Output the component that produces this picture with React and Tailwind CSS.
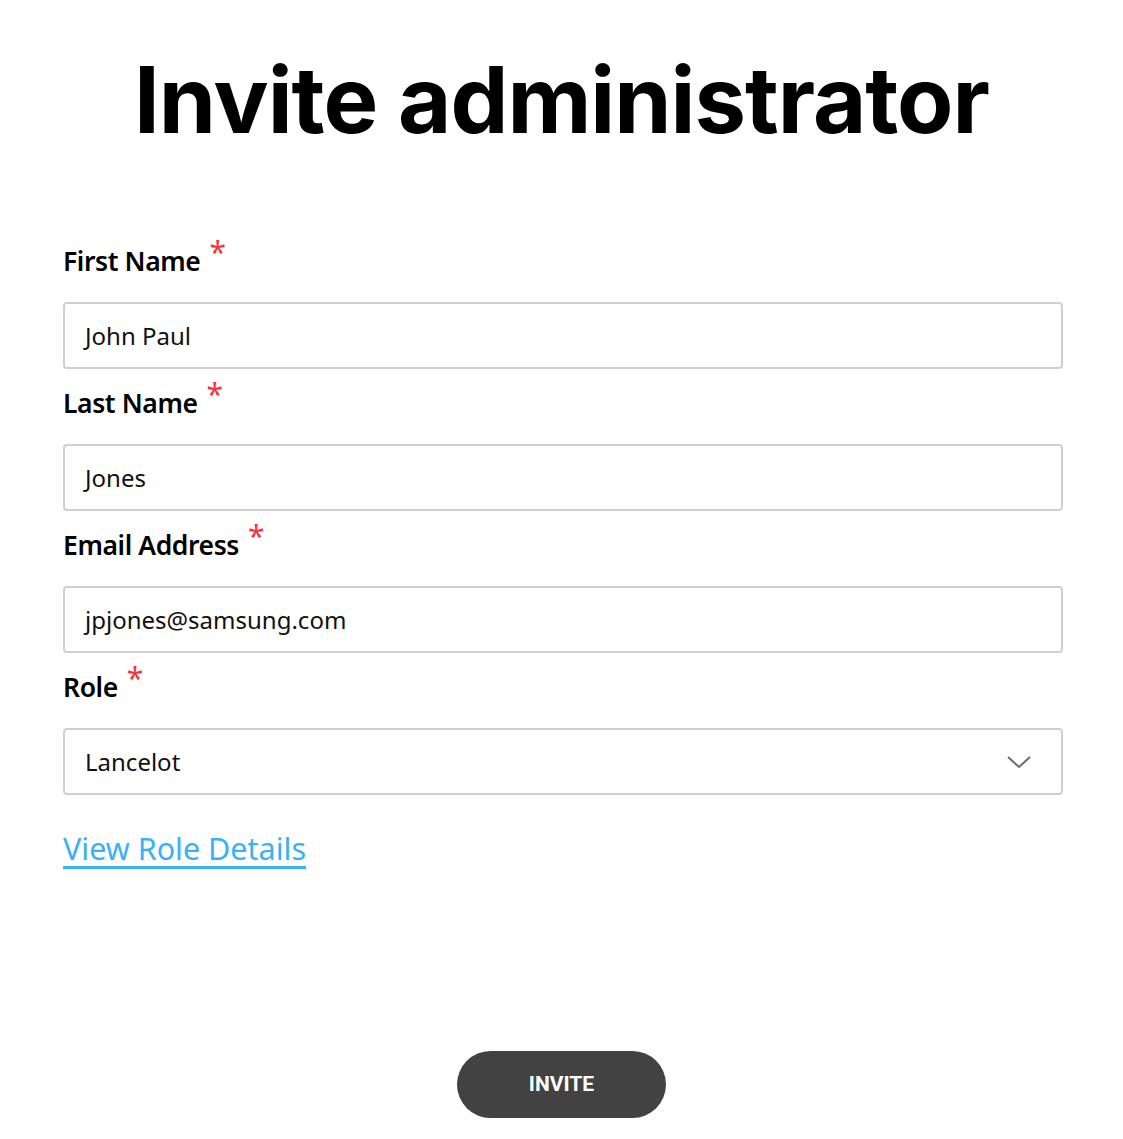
import React from "react";

function Label({ children }) {
  return (
    <div className="flex items-center h-[56px] mt-[6px]">
      <span className="text-[26.5px] font-semibold text-black leading-[40px] tracking-[-0.4px]">{children}</span>
      <span className="text-[30px] text-[#f4333f] leading-[30px] ml-[9px] mt-[-18px]">*</span>
    </div>
  );
}

function Field({ label, value, select }) {
  return (
    <div className="flex flex-col">
      <Label>{label}</Label>
      <div className="mt-[13px] h-[67px] border-2 border-[#cfcfcf] rounded-[4px] flex items-center justify-between pl-[20px] pr-[20px]">
        <span className="text-[24px] text-[#111] leading-none">{value}</span>
        {select && (
          <svg width="26" height="16" viewBox="0 0 26 16" fill="none" className="mr-[9px]">
            <path d="M2 3 L13 13 L24 3" stroke="#6b6b6b" strokeWidth="2" />
          </svg>
        )}
      </div>
    </div>
  );
}

export default function App() {
  return (
    <div className="w-[1123px] h-[1139px] bg-white relative" style={{ fontFamily: '"Noto Sans", "Open Sans", sans-serif' }}>
      <h1
        className="text-center text-[92px] font-bold text-black leading-none pt-[54px] tracking-[-1px]"
        style={{ fontFamily: 'Inter, "Noto Sans", sans-serif' }}
      >
        Invite administrator
      </h1>
      <div className="ml-[63px] w-[1000px] mt-[81px] flex flex-col">
        <Field label="First Name" value="John Paul" />
        <Field label="Last Name" value="Jones" />
        <Field label="Email Address" value="jpjones@samsung.com" />
        <Field label="Role" value="Lancelot" select />
      </div>
      <div className="ml-[63px] mt-[33px] h-[40px] flex items-center">
        <a href="#" className="text-[30.5px] leading-[40px] text-[#3ab0f8] underline decoration-[3px] underline-offset-[6px]">View Role Details</a>
      </div>
      <div className="flex justify-center mt-[183px]">
        <button
          className="w-[209px] h-[67px] rounded-full bg-[#424242] text-white text-[21px] font-bold"
          style={{ fontFamily: 'Roboto, "Noto Sans", sans-serif' }}
        >
          INVITE
        </button>
      </div>
    </div>
  );
}
